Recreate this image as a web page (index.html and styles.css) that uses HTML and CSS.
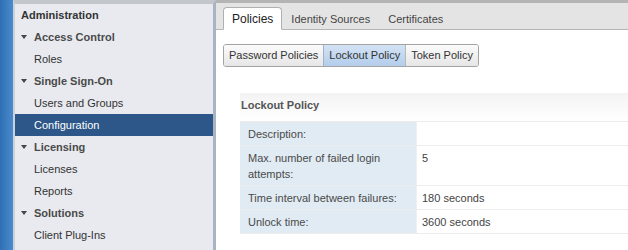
FILE: index.html
```html
<!DOCTYPE html>
<html>
<head>
<meta charset="utf-8">
<link rel="stylesheet" href="styles.css">
</head>
<body>
<div class="app">
  <div class="strip"></div>
  <nav class="sidebar">
    <div class="nav-title">Administration</div>
    <div class="nav-group"><span class="caret"></span>Access Control</div>
    <div class="nav-item">Roles</div>
    <div class="nav-group"><span class="caret"></span>Single Sign-On</div>
    <div class="nav-item">Users and Groups</div>
    <div class="nav-item selected">Configuration</div>
    <div class="nav-group"><span class="caret"></span>Licensing</div>
    <div class="nav-item">Licenses</div>
    <div class="nav-item">Reports</div>
    <div class="nav-group"><span class="caret"></span>Solutions</div>
    <div class="nav-item">Client Plug-Ins</div>
  </nav>
  <main class="main">
    <div class="tabbar">
      <div class="tab active">Policies</div>
      <div class="tab">Identity Sources</div>
      <div class="tab">Certificates</div>
    </div>
    <div class="btn-group">
      <div class="btn">Password Policies</div>
      <div class="btn on">Lockout Policy</div>
      <div class="btn">Token Policy</div>
    </div>
    <section class="panel">
      <div class="panel-head">Lockout Policy</div>
      <div class="table">
        <div class="row"><div class="label">Description:</div><div class="value"></div></div>
        <div class="row"><div class="label">Max. number of failed login attempts:</div><div class="value">5</div></div>
        <div class="row"><div class="label">Time interval between failures:</div><div class="value">180 seconds</div></div>
        <div class="row"><div class="label">Unlock time:</div><div class="value">3600 seconds</div></div>
      </div>
    </section>
  </main>
</div>
</body>
</html>
```

FILE: styles.css
```css
* { box-sizing: border-box; }
html, body { margin: 0; padding: 0; }
body {
  font-family: "Liberation Sans", Arial, sans-serif;
  font-size: 11px;
  color: #333;
  background: #fff;
  width: 628px;
  height: 250px;
  overflow: hidden;
}
.app { display: flex; height: 250px; }
.strip {
  width: 13px;
  flex: none;
  background: linear-gradient(to right, #2f6fb4, #4a8bcc);
}
.sidebar {
  width: 203px;
  flex: none;
  background: #e8eaef;
  border-top: 4px solid #c3c7cc;
  border-left: 2px solid #cdd2da;
  border-right: 3px solid #a9b4c3;
}
.nav-title, .nav-group, .nav-item {
  height: 22px;
  line-height: 22px;
  white-space: nowrap;
}
.nav-title { padding-left: 6px; font-weight: bold; color: #333; }
.nav-group { padding-left: 6px; font-weight: bold; color: #4a4a4a; display: flex; align-items: center; }
.caret {
  width: 0; height: 0;
  border-left: 3px solid transparent;
  border-right: 3px solid transparent;
  border-top: 4px solid #444;
  margin-right: 7px;
}
.nav-item { padding-left: 19px; color: #333; }
.nav-item.selected { background: #2c5788; color: #fff; }
.main { flex: 1; min-width: 0; border-top: 3px solid #b4b4b4; }
.tabbar {
  height: 27px;
  background: #e4e4e4;
  border-bottom: 1px solid #b5b5b5;
  display: flex;
  align-items: flex-end;
  padding-left: 7px;
}
.tab {
  height: 23px;
  line-height: 22px;
  padding: 0 8px;
  color: #444;
  margin-bottom: -1px;
  border: 1px solid transparent;
}
.tab.active {
  background: #fff;
  border: 1px solid #b0b0b0;
  border-bottom-color: #fff;
  border-radius: 4px 4px 0 0;
  color: #222;
  font-size: 12px;
}
.btn-group {
  display: inline-flex;
  margin: 14px 0 0 7px;
  border: 1px solid #a3a3a3;
  border-radius: 3px;
  overflow: hidden;
}
.btn {
  height: 21px;
  line-height: 21px;
  padding: 0 5px;
  background: linear-gradient(#fbfbfb, #e6e6e6);
  color: #333;
  border-left: 1px solid #b8b8b8;
  white-space: nowrap;
}
.btn:first-child { border-left: none; }
.btn.on { background: linear-gradient(#d4e3f5, #b3cdec); border-left-color: #9fb3cc; }
.panel { margin: 26px 0 0 24px; }
.panel-head {
  height: 29px;
  line-height: 24px;
  padding-left: 1px;
  font-weight: bold;
  color: #555;
  background: linear-gradient(#f3f3f3, #fff);
  border-bottom: 1px solid #ececec;
}
.table { border-bottom: 1px solid #ececec; }
.row { display: flex; border-top: 1px solid #ededed; }
.row:first-child { border-top: none; }
.label {
  width: 177px;
  flex: none;
  background: #e1ebf3;
  padding: 4px 10px 3px 8px;
  line-height: 16px;
  color: #4a4a4a;
  border-right: 1px solid #f0f0f0;
}
.value { padding: 4px 5px 3px; line-height: 16px; color: #444; }
```
